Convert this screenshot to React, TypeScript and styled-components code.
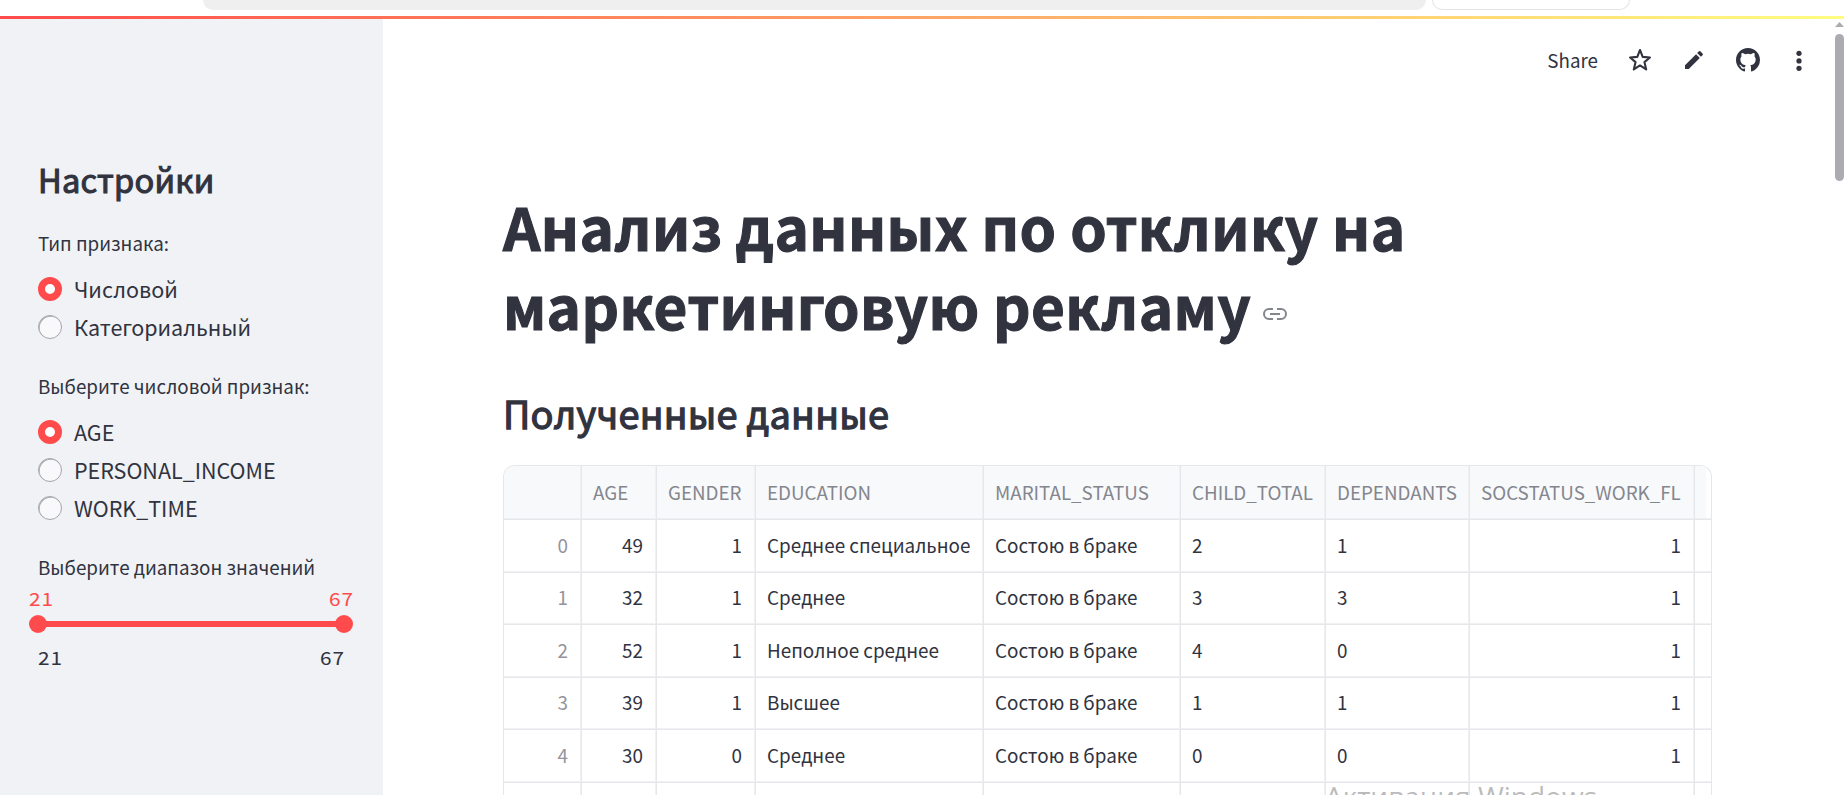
import React from "react";
import styled, { createGlobalStyle } from "styled-components";

const Global = createGlobalStyle`
  * { box-sizing: border-box; }
  html, body { margin: 0; height: 100%; overflow: hidden; background: #fff; }
  body { font-family: "Noto Sans CJK SC", "Noto Sans", sans-serif; color: #31333f; }
  #root { height: 100%; }
  h1, h2, p { margin: 0; }
`;

const Page = styled.div`
  display: flex;
  flex-direction: column;
  width: 1844px;
  height: 795px;
  overflow: hidden;
`;
const BrowserStrip = styled.div`
  display: flex;
  height: 16px;
  flex: none;
  padding-left: 203px;
  gap: 6px;
`;
const AddressBar = styled.div`
  width: 1223px;
  height: 10px;
  background: #efefef;
  border-radius: 0 0 10px 10px;
`;
const SearchBar = styled.div`
  width: 198px;
  height: 10px;
  border: 1px solid #e4e4e8;
  border-top: 0;
  border-radius: 0 0 12px 12px;
`;
const Decoration = styled.div`
  height: 3px;
  flex: none;
  background: linear-gradient(90deg, #ff4b4b, #fffd80);
`;
const Body = styled.div`
  display: flex;
  flex: 1;
  min-height: 0;
`;
const Sidebar = styled.aside`
  width: 383px;
  flex: none;
  background: #f0f2f6;
  padding: 138px 38px 0;
`;
const Text = styled.span<{ $size: number; $line: number; $space?: number; $weight?: number; $stroke?: number }>`
  display: block;
  white-space: nowrap;
  font-size: ${(p) => p.$size}px;
  line-height: ${(p) => p.$line}px;
  letter-spacing: ${(p) => p.$space ?? 0}px;
  font-weight: ${(p) => p.$weight ?? 400};
  -webkit-text-stroke: ${(p) => p.$stroke ?? 0}px currentColor;
`;
const Group = styled.div<{ $top: number }>`
  margin-top: ${(p) => p.$top}px;
`;
const Options = styled.div`
  display: flex;
  flex-direction: column;
  margin-top: 12px;
`;
const Option = styled.label`
  display: flex;
  align-items: center;
  gap: 12px;
  height: 38.3px;
`;
const Radio = styled.span<{ $on?: boolean }>`
  width: 24px;
  height: 24px;
  flex: none;
  border-radius: 50%;
  background: ${(p) => (p.$on ? "#fff" : "#f9f9fb")};
  border: ${(p) => (p.$on ? "7.5px solid #ff4b4b" : "1px solid #a3a5ad")};
  box-shadow: ${(p) => (p.$on ? "none" : "inset 0.7px 0.7px 0.5px #a3a5ad")};
`;
const SliderValues = styled.div<{ $accent?: boolean }>`
  display: flex;
  justify-content: space-between;
  margin: ${(p) => (p.$accent ? "2px -7px 0 -9px" : "0 2px 0 0")};
  color: ${(p) => (p.$accent ? "#ff4b4b" : "inherit")};
`;
const Digits = styled.span`
  width: 23.5px;
  font-size: 18.4px;
  line-height: 28px;
  letter-spacing: 0.8px;
  transform: scaleX(1.13);
  transform-origin: left;
`;
const Track = styled.div`
  display: flex;
  align-items: center;
  justify-content: space-between;
  height: 18px;
  margin: 3px -8px 10px -9px;
  background: linear-gradient(#ff4b4b, #ff4b4b) center / calc(100% - 18px) 6px no-repeat;
`;
const Thumb = styled.span`
  width: 18px;
  height: 18px;
  border-radius: 50%;
  background: #ff4b4b;
`;
const Main = styled.main`
  flex: 1;
  min-width: 0;
  display: flex;
  flex-direction: column;
  padding-left: 120px;
`;
const Toolbar = styled.header`
  display: flex;
  align-items: center;
  justify-content: flex-end;
  height: 82px;
  padding-right: 33px;
  flex: none;
`;
const ToolIcon = styled.svg<{ $left: number }>`
  display: block;
  margin-left: ${(p) => p.$left}px;
  flex: none;
`;
const Title = styled.h1`
  margin-top: 85px;
`;
const TitleRow = styled.div`
  display: flex;
  align-items: center;
`;
const LinkIcon = styled.svg`
  margin: 18px 0 0 12px;
`;
const Subtitle = styled.h2`
  margin-top: 44px;
  height: 77px;
  flex: none;
`;
const Frame = styled.div`
  width: 1209px;
  flex: 1;
  min-height: 0;
  border: 1px solid #e6e7ea;
  border-bottom: 0;
  border-radius: 12px 12px 0 0;
  overflow: hidden;
  padding-right: 5px;
`;
const Row = styled.div<{ $head?: boolean }>`
  display: grid;
  grid-template-columns: 78px 75px 99px 228px 197px 145px 144px 225px 12px;
  height: ${(p) => (p.$head ? 54 : 52.5)}px;
  color: ${(p) => (p.$head ? "#84868e" : "inherit")};
  background: ${(p) => (p.$head ? "#f8f9fb" : "#fff")};
`;
const Cell = styled.div<{ $right?: boolean; $muted?: boolean }>`
  display: flex;
  align-items: center;
  justify-content: ${(p) => (p.$right ? "flex-end" : "flex-start")};
  padding: 0 13px 2.5px 11px;
  color: ${(p) => (p.$muted ? "#93949b" : "inherit")};
  border-right: 1px solid #e6e7ea;
  border-bottom: 1px solid #e6e7ea;
  box-shadow: inset -1px -1px #f1f1f4;
  overflow: hidden;
  &:last-child { border-right: 0; box-shadow: inset 0 -1px #f1f1f4; }
`;
const Scrollbar = styled.div`
  width: 9px;
  flex: none;
  display: flex;
  flex-direction: column;
  align-items: center;
  padding-top: 3px;
`;
const ScrollThumb = styled.div`
  width: 9px;
  height: 147px;
  margin-top: 7px;
  border-radius: 5px;
  background: #acabb1;
`;
const Watermark = styled.div`
  position: absolute;
  left: 1325px;
  top: 776px;
  height: 19px;
  overflow: hidden;
  color: rgba(120, 120, 120, 0.5);
  font-family: "Open Sans", sans-serif;
`;

const columns = ["", "AGE", "GENDER", "EDUCATION", "MARITAL_STATUS", "CHILD_TOTAL", "DEPENDANTS", "SOCSTATUS_WORK_FL", ""];
const rightAligned = [0, 1, 2, 7];
const rows = [
  ["0", "49", "1", "Среднее специальное", "Состою в браке", "2", "1", "1", ""],
  ["1", "32", "1", "Среднее", "Состою в браке", "3", "3", "1", ""],
  ["2", "52", "1", "Неполное среднее", "Состою в браке", "4", "0", "1", ""],
  ["3", "39", "1", "Высшее", "Состою в браке", "1", "1", "1", ""],
  ["4", "30", "0", "Среднее", "Состою в браке", "0", "0", "1", ""],
  ["", "", "", "", "", "", "", "", ""],
];

function RadioGroup({ top, label, options }: { top: number; label: string; options: string[] }) {
  return (
    <Group $top={top}>
      <Text $size={18.8} $line={30}>{label}</Text>
      <Options>
        {options.map((option, i) => (
          <Option key={option}>
            <Radio $on={i === 0} />
            <Text $size={21.5} $line={36}>{option}</Text>
          </Option>
        ))}
      </Options>
    </Group>
  );
}

function ValuePair({ accent }: { accent?: boolean }) {
  return (
    <SliderValues $accent={accent}>
      <Digits>21</Digits>
      <Digits>67</Digits>
    </SliderValues>
  );
}

export default function App() {
  return (
    <Page>
      <Global />
      <BrowserStrip>
        <AddressBar />
        <SearchBar />
      </BrowserStrip>
      <Decoration />
      <Body>
        <Sidebar>
          <Text as="h2" $size={32.6} $line={44} $weight={400} $stroke={1.1} $space={0.25}>Настройки</Text>
          <RadioGroup top={27} label="Тип признака:" options={["Числовой", "Категориальный"]} />
          <RadioGroup top={24} label="Выберите числовой признак:" options={["AGE", "PERSONAL_INCOME", "WORK_TIME"]} />
          <Group $top={25}>
            <Text $size={18.8} $line={30}>Выберите диапазон значений</Text>
            <ValuePair accent />
            <Track>
              <Thumb />
              <Thumb />
            </Track>
            <ValuePair />
          </Group>
        </Sidebar>
        <Main>
          <Toolbar>
            <Text $size={18.8} $line={30}>Share</Text>
            <ToolIcon $left={28} width="28" height="28" viewBox="0 0 24 24" fill="none" stroke="#31333f" strokeWidth="1.8" strokeLinejoin="round">
              <path d="M12 3.4l2.3 5.9 6.2.5-4.7 4 1.5 6.3-5.3-3.4-5.3 3.4 1.5-6.3-4.7-4 6.2-.5z" />
            </ToolIcon>
            <ToolIcon $left={28} width="24" height="24" viewBox="0 0 24 24" fill="#31333f">
              <path d="M3 17.25V21h3.75L17.81 9.94l-3.75-3.75L3 17.25zM20.71 7.04a1 1 0 0 0 0-1.41l-2.34-2.34a1 1 0 0 0-1.41 0l-1.83 1.83 3.75 3.75 1.83-1.83z" />
            </ToolIcon>
            <ToolIcon $left={30} width="24" height="24" viewBox="0 0 16 16" fill="#31333f">
              <path d="M8 0C3.58 0 0 3.58 0 8c0 3.54 2.29 6.53 5.47 7.59.4.07.55-.17.55-.38 0-.19-.01-.82-.01-1.49-2.01.37-2.53-.49-2.69-.94-.09-.23-.48-.94-.82-1.13-.28-.15-.68-.52-.01-.53.63-.01 1.08.58 1.23.82.72 1.21 1.87.87 2.33.66.07-.52.28-.87.51-1.07-1.78-.2-3.64-.89-3.64-3.95 0-.87.31-1.59.82-2.15-.08-.2-.36-1.02.08-2.12 0 0 .67-.21 2.2.82a7.6 7.6 0 0 1 4 0c1.53-1.04 2.2-.82 2.2-.82.44 1.1.16 1.92.08 2.12.51.56.82 1.27.82 2.15 0 3.07-1.87 3.75-3.65 3.95.29.25.54.73.54 1.48 0 1.07-.01 1.93-.01 2.2 0 .21.15.46.55.38A8.01 8.01 0 0 0 16 8c0-4.42-3.58-8-8-8z" />
            </ToolIcon>
            <ToolIcon $left={36} width="6" height="22" viewBox="0 0 6 22" fill="#31333f">
              <circle cx="3" cy="4.3" r="2.6" />
              <circle cx="3" cy="11.9" r="2.6" />
              <circle cx="3" cy="19.3" r="2.6" />
            </ToolIcon>
          </Toolbar>
          <Title>
            <Text $size={58.4} $line={79.2} $weight={700} $stroke={1.1} $space={0.38}>Анализ данных по отклику на</Text>
            <TitleRow>
              <Text $size={58.4} $line={79.2} $weight={700} $stroke={1.1} $space={0.38}>маркетинговую рекламу</Text>
              <LinkIcon width="24" height="12" viewBox="0 0 24 12" fill="none" stroke="#84868e" strokeWidth="2">
                <path d="M10 1H6a5 5 0 0 0 0 10h4M14 1h4a5 5 0 0 1 0 10h-4M7 6h10" />
              </LinkIcon>
            </TitleRow>
          </Title>
          <Subtitle>
            <Text $size={37.9} $line={50} $weight={400} $stroke={1.3} $space={0.25}>Полученные данные</Text>
          </Subtitle>
          <Frame>
            <Row $head>
              {columns.map((name, i) => (
                <Cell key={i}><Text $size={18.8} $line={30}>{name}</Text></Cell>
              ))}
            </Row>
            {rows.map((row, r) => (
              <Row key={r}>
                {row.map((value, i) => (
                  <Cell key={i} $right={rightAligned.includes(i)} $muted={i === 0}>
                    <Text $size={18.85} $line={30}>{value}</Text>
                  </Cell>
                ))}
              </Row>
            ))}
          </Frame>
        </Main>
        <Scrollbar>
          <svg width="9" height="5" viewBox="0 0 9 5" fill="#acabb1"><path d="M4.5 0L9 5H0z" /></svg>
          <ScrollThumb />
        </Scrollbar>
      </Body>
      <Watermark>
        <Text $size={28} $line={40}>Активация Windows</Text>
      </Watermark>
    </Page>
  );
}
